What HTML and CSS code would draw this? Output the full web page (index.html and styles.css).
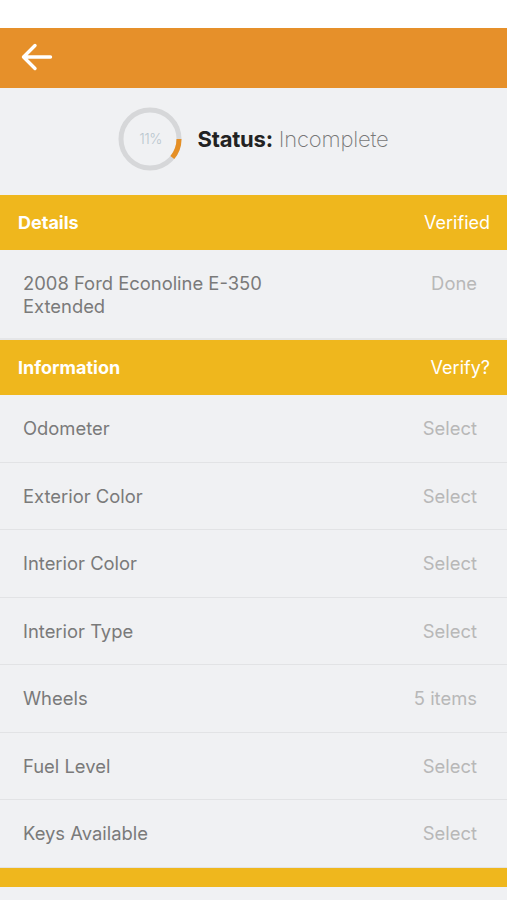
FILE: index.html
```html
<!DOCTYPE html>
<html>
<head>
<meta charset="utf-8">
<link rel="stylesheet" href="styles.css">
</head>
<body>
<div class="statusbar"></div>
<header class="topbar">
  <svg class="back" width="34" height="32" viewBox="0 0 34 32">
    <path d="M31.5 16H4.5M16 4.5L4.5 16L16 27.5" fill="none" stroke="#fff" stroke-width="3.4" stroke-linecap="round" stroke-linejoin="round"/>
  </svg>
</header>
<section class="status">
  <div class="ring">
    <svg width="64" height="64" viewBox="0 0 64 64">
      <circle cx="32" cy="32" r="29" fill="none" stroke="#d6d7d9" stroke-width="5"/>
      <circle cx="32" cy="32" r="29" fill="none" stroke="#e58f25" stroke-width="5" stroke-dasharray="20 200"/>
    </svg>
    <span class="pct">11%</span>
  </div>
  <div class="status-text"><b>Status:</b> <span>Incomplete</span></div>
</section>
<div class="section-head"><span>Details</span><span class="right">Verified</span></div>
<div class="detail-row">
  <div class="label">2008 Ford Econoline E-350<br>Extended</div>
  <div class="value">Done</div>
</div>
<div class="section-head"><span>Information</span><span class="right">Verify?</span></div>
<div class="row"><span class="label">Odometer</span><span class="value">Select</span></div>
<div class="row"><span class="label">Exterior Color</span><span class="value">Select</span></div>
<div class="row"><span class="label">Interior Color</span><span class="value">Select</span></div>
<div class="row"><span class="label">Interior Type</span><span class="value">Select</span></div>
<div class="row"><span class="label">Wheels</span><span class="value">5 items</span></div>
<div class="row"><span class="label">Fuel Level</span><span class="value">Select</span></div>
<div class="row"><span class="label">Keys Available</span><span class="value">Select</span></div>
<div class="section-head short"></div>
<div class="tail"></div>
</body>
</html>
```
FILE: styles.css
```css
html, body {
  margin: 0;
  padding: 0;
}
body {
  background: #f0f1f3;
  font-family: "Inter", "Roboto", "Liberation Sans", sans-serif;
  width: 507px;
  height: 900px;
  overflow: hidden;
}
.statusbar {
  height: 28px;
  background: #fff;
}
.topbar {
  height: 60px;
  background: #e6902a;
  display: flex;
  align-items: center;
  padding-left: 19px;
  box-sizing: border-box;
}
.back {
  display: block;
  margin-top: -3px;
}
.status {
  height: 107px;
  display: flex;
  align-items: center;
  justify-content: center;
  gap: 15px;
  padding-bottom: 5px;
  box-sizing: border-box;
}
.ring {
  position: relative;
  width: 64px;
  height: 64px;
}
.ring svg {
  display: block;
}
.pct {
  position: absolute;
  inset: 0;
  display: flex;
  align-items: center;
  justify-content: center;
  font-size: 14px;
  font-weight: 300;
  color: #b9c6ce;
  letter-spacing: -0.6px;
  padding-bottom: 1px;
}
.status-text {
  font-size: 22px;
  color: #222;
  letter-spacing: -0.2px;
  padding-bottom: 1px;
}
.status-text b {
  font-weight: 700;
}
.status-text span {
  font-weight: 200;
  color: #777;
}
.section-head {
  height: 55px;
  background: #efb71d;
  display: flex;
  align-items: center;
  justify-content: space-between;
  padding: 0 17px 0 18px;
  color: #fff;
  font-size: 18px;
  font-weight: 700;
  box-sizing: border-box;
}
.section-head .right {
  font-weight: 400;
}
.section-head.short {
  height: 19px;
}
.detail-row {
  height: 90px;
  display: flex;
  justify-content: space-between;
  align-items: flex-start;
  padding: 22px 30px 0 23px;
  box-sizing: border-box;
  border-bottom: 2px solid #e5e6e8;
}
.detail-row .label {
  font-size: 18.4px;
  line-height: 23px;
  color: #7a7a7a;
}
.detail-row .value {
  font-size: 18.4px;
  line-height: 23px;
  color: #b8b8b8;
}
.row {
  height: 67.5px;
  display: flex;
  justify-content: space-between;
  align-items: center;
  padding: 0 30px 0 23px;
  box-sizing: border-box;
  border-bottom: 1px solid #e2e3e5;
  font-size: 18.4px;
}
.row:last-of-type {
  border-bottom: none;
}
.row .label {
  color: #7a7a7a;
}
.row .value {
  color: #b8b8b8;
}
.tail {
  height: 20px;
}
```
